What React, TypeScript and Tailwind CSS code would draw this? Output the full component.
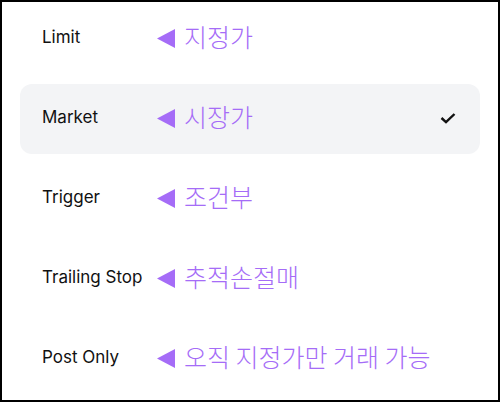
const rows = [
  { name: 'Limit', note: '지정가' },
  { name: 'Market', note: '시장가', active: true },
  { name: 'Trigger', note: '조건부' },
  { name: 'Trailing Stop', note: '추적손절매' },
  { name: 'Post Only', note: '오직 지정가만 거래 가능' },
]

function Arrow() {
  return (
    <svg width="18" height="19" viewBox="0 0 18 19" className="shrink-0 -mt-[2px]">
      <polygon points="18,0 18,19 0,9.5" fill="#a56cf7" />
    </svg>
  )
}

export default function App() {
  return (
    <div className="w-[500px] h-[402px] border-2 border-black bg-white overflow-hidden">
      <div className="flex flex-col gap-[10px] px-[18px] pt-[2px]">
        {rows.map((r) => (
          <div
            key={r.name}
            className={`h-[70px] rounded-xl flex items-center pl-[22px] pr-[22px] ${r.active ? 'bg-[#f3f4f6]' : ''}`}
          >
            <span className="w-[115px] -mt-[3px] text-[17px] font-normal text-[#111] font-['Inter',sans-serif]">{r.name}</span>
            <Arrow />
            <span className="ml-[9px] -mt-[5px] text-[25px] font-light leading-none text-[#a56cf7] font-['Noto_Sans_CJK_KR',sans-serif]">{r.note}</span>
            {r.active && (
              <svg width="16" height="11" viewBox="0 0 16 11" className="ml-auto mr-[2px] -mt-[1px]">
                <polyline points="1.5,5 6,9.2 14.5,1" fill="none" stroke="#111" strokeWidth="2.4" />
              </svg>
            )}
          </div>
        ))}
      </div>
    </div>
  )
}
